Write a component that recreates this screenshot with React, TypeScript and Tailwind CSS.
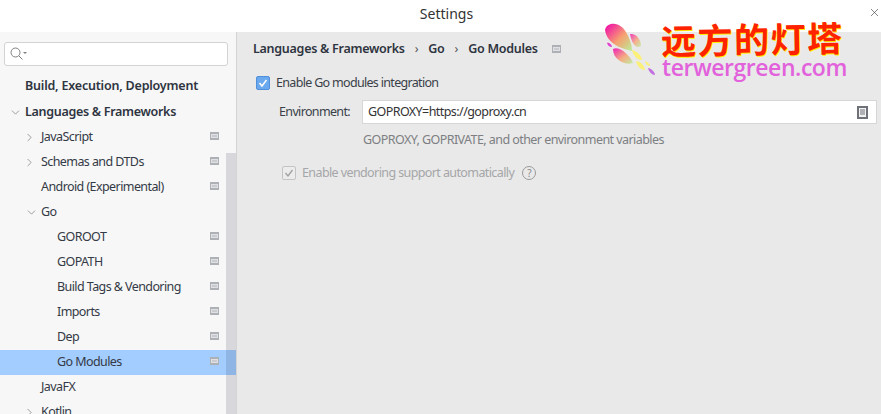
import React from "react";
import { ChevronDown, ChevronRight, X } from "lucide-react";

const font = "font-['Noto_Sans','Open_Sans',sans-serif]";

function PageIcon() {
  return (
    <span className="w-[9px] h-[8px] bg-[#adb0b5] shrink-0 block pt-[2px] px-[1px]">
      <span className="block w-[7px] h-[4px] border border-[#dfe1e4] bg-[#c9cbcf]" />
    </span>
  );
}

type RowProps = {
  label: string;
  indent: number;
  arrow?: "right" | "down";
  bold?: boolean;
  icon?: boolean;
  selected?: boolean;
  height?: string;
  tracking?: string;
};

function Row({ label, indent, arrow, bold, icon = true, selected, height = "h-[25px]", tracking = "tracking-[-0.3px]" }: RowProps) {
  return (
    <div className={`${height} flex items-center shrink-0 ${selected ? "bg-[#a4cdff]" : ""}`}>
      <div className="w-[226px] flex items-center h-full">
        <div className="shrink-0 flex justify-end" style={{ width: indent }}>
          {arrow === "right" && <ChevronRight className="w-[13px] h-[13px] text-[#6e6e6e] mr-[5px]" strokeWidth={1.2} />}
          {arrow === "down" && <ChevronDown className="w-[13px] h-[13px] text-[#6e6e6e] mr-[3px]" strokeWidth={1.2} />}
        </div>
        <span className={`flex-1 whitespace-nowrap ${bold ? `text-[12.5px] font-semibold text-[#2e3440] ${tracking}` : "text-[12.5px] tracking-[-0.58px] text-[#343a46]"}`}>{label}</span>
        {icon && <span className="mr-[7px] mb-[3px]"><PageIcon /></span>}
      </div>
    </div>
  );
}

function Sidebar() {
  return (
    <aside className="w-[236px] shrink-0 bg-[#f7f7f7] flex flex-col relative overflow-hidden">
      <div className="pt-[10px] pl-[4px] pb-[7px] shrink-0">
        <div className="h-[24px] w-[224px] bg-white border border-[#d3d3d3] rounded-[3px] flex items-center pl-[5px]">
          <svg width="17" height="14" viewBox="0 0 17 14" fill="none" stroke="#808080" strokeWidth="1">
            <circle cx="5.5" cy="5.5" r="4.5" />
            <path d="M9 9l3.5 3.5" />
            <path d="M13 5h4l-2 2z" fill="#808080" stroke="none" />
          </svg>
        </div>
      </div>
      <div className="flex flex-col">
        <Row label="Build, Execution, Deployment" indent={25} bold icon={false} height="h-[26px]" tracking="tracking-[-0.2px]" />
        <Row label="Languages & Frameworks" indent={25} arrow="down" bold icon={false} height="h-[26px]" />
        <Row label="JavaScript" indent={41} arrow="right" />
        <Row label="Schemas and DTDs" indent={41} arrow="right" />
        <Row label="Android (Experimental)" indent={41} />
        <Row label="Go" indent={41} arrow="down" icon={false} />
        <Row label="GOROOT" indent={57} />
        <Row label="GOPATH" indent={57} />
        <Row label="Build Tags & Vendoring" indent={57} />
        <Row label="Imports" indent={57} />
        <Row label="Dep" indent={57} />
        <Row label="Go Modules" indent={57} selected />
        <Row label="JavaFX" indent={41} icon={false} />
        <Row label="Kotlin" indent={41} arrow="right" icon={false} />
      </div>
      <div className="absolute right-0 top-[121px] bottom-0 w-[10px] bg-[#d8d8dc]" />
      <div className="absolute right-0 top-[318px] h-[25px] w-[10px] bg-[#8fb5e4]" />
    </aside>
  );
}

function Content() {
  return (
    <main className="flex-1 bg-[#e9e9e9] border-l border-[#d4d4d4] pl-[16px] min-w-0">
      <div className="flex items-center h-[34px] text-[12.5px] tracking-[-0.27px] font-semibold text-[#2e3440]">
        <span>Languages &amp; Frameworks</span>
        <span className="mx-[10px] font-normal text-[#555]">›</span>
        <span>Go</span>
        <span className="mx-[10px] font-normal text-[#555]">›</span>
        <span>Go Modules</span>
        <span className="ml-[14px]"><PageIcon /></span>
      </div>
      <div className="flex items-center h-[24px] mt-[5px] text-[12.5px] tracking-[-0.68px] text-[#3a3f48]">
        <span className="w-[14px] h-[14px] ml-[3px] mr-[6px] rounded-[2px] bg-[#6ba9ee] border border-[#4f8fdc] flex items-center justify-center">
          <svg width="10" height="10" viewBox="0 0 10 10" fill="none" stroke="white" strokeWidth="1.5"><path d="M1.5 5l2.5 3 4.5-6" /></svg>
        </span>
        Enable Go modules integration
      </div>
      <div className="flex items-center mt-[5px] h-[24px]">
        <span className="w-[83px] ml-[26px] text-[12.5px] tracking-[-0.65px] text-[#3a3f48] shrink-0">Environment:</span>
        <div className="w-[515px] h-[24px] bg-white border border-[#d6d6d6] flex items-center justify-between pl-[5px] pr-[8px] text-[12.5px] tracking-[-0.57px] text-[#333]">
          GOPROXY=https://goproxy.cn
          <svg width="11" height="13" viewBox="0 0 11 13">
            <rect width="11" height="13" fill="#6e7178" />
            <rect x="2" y="2" width="7" height="9" fill="#f2f2f2" />
            <path d="M3 4h5M3 6h5M3 8h5" stroke="#6e7178" strokeWidth="1" />
          </svg>
        </div>
      </div>
      <div className="ml-[110px] mt-[4px] h-[24px] flex items-center text-[12.5px] tracking-[-0.56px] text-[#7d7f83]">
        GOPROXY, GOPRIVATE, and other environment variables
      </div>
      <div className="flex items-center ml-[29px] mt-[9px] h-[24px] text-[12.5px] tracking-[-0.6px] text-[#a5a6a8]">
        <span className="w-[14px] h-[14px] mr-[6px] rounded-[2px] bg-[#ececec] border border-[#c4c4c4] flex items-center justify-center">
          <svg width="10" height="10" viewBox="0 0 10 10" fill="none" stroke="#a0a0a0" strokeWidth="1.3"><path d="M1.5 5l2.5 3 4.5-6" /></svg>
        </span>
        Enable vendoring support automatically
        <span className="ml-[8px] w-[14px] h-[14px] rounded-full border border-[#9a9a9a] text-[10px] text-[#8a8a8a] flex items-center justify-center">?</span>
      </div>
    </main>
  );
}

function Watermark() {
  return (
    <div className="absolute left-[604px] top-[20px] w-[250px] h-[60px]">
      <svg className="absolute left-0 top-[2px]" width="62" height="56" viewBox="0 0 62 56">
        <defs>
          <linearGradient id="wing" x1="0" y1="0" x2="1" y2="1">
            <stop offset="0" stopColor="#f000b0" />
            <stop offset="0.55" stopColor="#f7a070" />
            <stop offset="1" stopColor="#b8f09a" />
          </linearGradient>
        </defs>
        <path d="M1 8C2 1 12 -1 19 6C25 13 28 23 28 29C18 27 3 22 1 8Z" fill="url(#wing)" />
        <path d="M26 12C32 11 37 17 37 24C33 27 28 23 26 12Z" fill="url(#wing)" opacity="0.75" />
        <path d="M9 27C15 24 25 32 29 41C22 44 9 38 9 27Z" fill="url(#wing)" opacity="0.85" />
        <path d="M3 21C5 20 8 23 8 25C6 25 4 24 3 21Z" fill="#e040d0" />
        <path d="M28 28C33 29 38 34 38 38C33 38 29 33 28 28Z" fill="#fbf078" />
        <path d="M32 39C36 39 41 44 41 48C37 48 33 44 32 39Z" fill="#fbf078" />
        <path d="M41 39C44 40 46 42 46 44C44 44 41 42 41 39Z" fill="#fbf078" />
        <path d="M44 46C47 46 51 50 51 53C48 53 45 50 44 46Z" fill="#c070e0" />
      </svg>
      <div className="absolute left-[57px] top-[3px] text-[35px] leading-[30px] tracking-[1.5px] whitespace-nowrap text-[#ff2200] font-semibold font-['Noto_Sans_CJK_SC',sans-serif] [text-shadow:1px_1px_0_#ffee00] -rotate-1">
        远方的灯塔
      </div>
      <div className="absolute left-[58px] top-[35px] text-[23px] leading-[24px] font-semibold text-[#e262dc] font-['Open_Sans',sans-serif] tracking-[-0.45px] whitespace-nowrap">
        terwergreen.com
      </div>
    </div>
  );
}

export default function App() {
  return (
    <div className={`w-[881px] h-[414px] flex flex-col overflow-hidden relative bg-white ${font}`}>
      <header className="h-[32px] shrink-0 bg-white relative flex items-center justify-center pl-[12px] pb-[6px] text-[14px] text-[#333]">
        Settings
        <X className="absolute right-[0px] top-[6px] w-[13px] h-[13px] text-[#444]" strokeWidth={1.2} />
      </header>
      <div className="flex flex-1 min-h-0">
        <Sidebar />
        <Content />
      </div>
      <Watermark />
    </div>
  );
}
